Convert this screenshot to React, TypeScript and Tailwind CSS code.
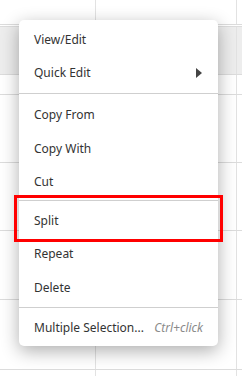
import type { ReactNode } from 'react';

type GridRowProps = { height: string; band?: boolean };

function GridRow({ height, band }: GridRowProps) {
  return (
    <div className={`flex shrink-0 border-b border-[#dcdcdc] ${height} ${band ? 'bg-[#ededed]' : 'bg-white'}`}>
      <div className="w-[96px] border-r border-[#e2e2e2]" />
      <div className="w-[141px] border-r border-[#e2e2e2]" />
      <div className="flex-1" />
    </div>
  );
}

function MenuItem({ children, right }: { children: ReactNode; right?: ReactNode }) {
  return (
    <div className="flex h-[33.5px] items-center justify-between pl-[15px] pr-[15px]">
      <span>{children}</span>
      {right}
    </div>
  );
}

function Separator({ className }: { className: string }) {
  return <div className={`h-px bg-[#cfcfcf] ${className}`} />;
}

export default function App() {
  return (
    <div className="relative h-[376px] w-[242px] overflow-hidden bg-white">
      <div className="flex flex-col">
        <GridRow height="h-[25px]" />
        <div className="h-[2px] border-b border-[#dcdcdc]" />
        <GridRow height="h-[48px]" band />
        <GridRow height="h-[20px]" />
        <GridRow height="h-[68px]" />
        <GridRow height="h-[68px]" />
        <GridRow height="h-[69px]" />
        <GridRow height="h-[70px]" />
        <GridRow height="h-[8px]" />
      </div>

      <div
        className="absolute left-[19px] top-[20px] w-[199px] rounded-[5px] bg-white pb-[1.75px] pt-[2.75px] text-[12px] text-[#333] shadow-[0_5px_18px_rgba(0,0,0,0.32)]"
        style={{ fontFamily: '"Noto Sans", "DejaVu Sans", sans-serif' }}
      >
        <MenuItem>View/Edit</MenuItem>
        <MenuItem right={<span className="mr-[1px] h-0 w-0 border-y-[5px] border-l-[6px] border-y-transparent border-l-[#444]" />}>Quick Edit</MenuItem>
        <Separator className="mb-[4px] mt-[3.5px]" />
        <MenuItem>Copy From</MenuItem>
        <MenuItem>Copy With</MenuItem>
        <MenuItem>Cut</MenuItem>
        <Separator className="mb-[2.5px] mt-[1.5px]" />
        <MenuItem>Split</MenuItem>
        <MenuItem>Repeat</MenuItem>
        <MenuItem>Delete</MenuItem>
        <Separator className="mb-[2.75px] mt-[2.75px]" />
        <MenuItem right={<span className="italic text-[#8a8a8a]">Ctrl+click</span>}>Multiple Selection...</MenuItem>
      </div>

      <div className="absolute left-[14px] top-[195px] h-[47px] w-[209px] border-[3px] border-[#ff0000]" />
    </div>
  );
}
